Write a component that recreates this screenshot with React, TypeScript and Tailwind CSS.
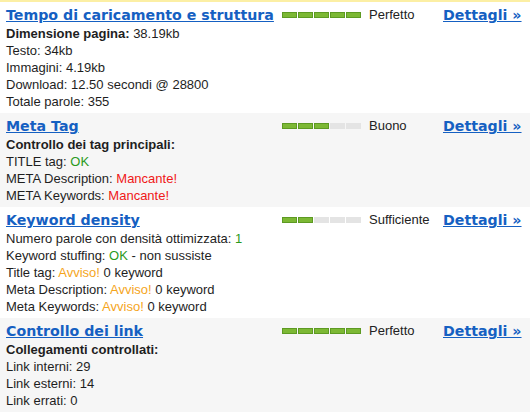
import React from 'react';

type Line = { parts: { text: string; tone?: 'ok' | 'bad' | 'warn' | 'bold' }[] };

type Section = {
  title: string;
  score: number;
  status: string;
  shaded: boolean;
  lines: Line[];
};

const TONES: Record<string, string> = {
  ok: 'text-[#2a9a1c]',
  bad: 'text-[#f01818]',
  warn: 'text-[#f5a51c]',
  bold: 'font-bold',
};

const SECTIONS: Section[] = [
  {
    title: 'Tempo di caricamento e struttura',
    score: 5,
    status: 'Perfetto',
    shaded: false,
    lines: [
      { parts: [{ text: 'Dimensione pagina:', tone: 'bold' }, { text: ' 38.19kb' }] },
      { parts: [{ text: 'Testo: 34kb' }] },
      { parts: [{ text: 'Immagini: 4.19kb' }] },
      { parts: [{ text: 'Download: 12.50 secondi @ 28800' }] },
      { parts: [{ text: 'Totale parole: 355' }] },
    ],
  },
  {
    title: 'Meta Tag',
    score: 3,
    status: 'Buono',
    shaded: true,
    lines: [
      { parts: [{ text: 'Controllo dei tag principali:', tone: 'bold' }] },
      { parts: [{ text: 'TITLE tag: ' }, { text: 'OK', tone: 'ok' }] },
      { parts: [{ text: 'META Description: ' }, { text: 'Mancante!', tone: 'bad' }] },
      { parts: [{ text: 'META Keywords: ' }, { text: 'Mancante!', tone: 'bad' }] },
    ],
  },
  {
    title: 'Keyword density',
    score: 2,
    status: 'Sufficiente',
    shaded: false,
    lines: [
      { parts: [{ text: 'Numero parole con densità ottimizzata: ' }, { text: '1', tone: 'ok' }] },
      { parts: [{ text: 'Keyword stuffing: ' }, { text: 'OK', tone: 'ok' }, { text: ' - non sussiste' }] },
      { parts: [{ text: 'Title tag: ' }, { text: 'Avviso!', tone: 'warn' }, { text: ' 0 keyword' }] },
      { parts: [{ text: 'Meta Description: ' }, { text: 'Avviso!', tone: 'warn' }, { text: ' 0 keyword' }] },
      { parts: [{ text: 'Meta Keywords: ' }, { text: 'Avviso!', tone: 'warn' }, { text: ' 0 keyword' }] },
    ],
  },
  {
    title: 'Controllo dei link',
    score: 5,
    status: 'Perfetto',
    shaded: true,
    lines: [
      { parts: [{ text: 'Collegamenti controllati:', tone: 'bold' }] },
      { parts: [{ text: 'Link interni: 29' }] },
      { parts: [{ text: 'Link esterni: 14' }] },
      { parts: [{ text: 'Link errati: 0' }] },
    ],
  },
];

function ScoreBar({ score }: { score: number }) {
  return (
    <div className="flex gap-[1px] w-[80px] mt-[7px] h-[6px]">
      {[0, 1, 2, 3, 4].map((i) =>
        i < score ? (
          <div key={i} className="w-[15px] h-[6px] bg-[#7cb834] border border-[#5d9a22]" />
        ) : (
          <div key={i} className="w-[15px] h-[6px] bg-[#e4e4e4]" />
        ),
      )}
    </div>
  );
}

export default function App() {
  return (
    <div className="w-[530px] h-[414px] overflow-hidden bg-white border-t-2 border-[#fcefa4] text-[13px] text-[#1e1e1e] font-['Liberation_Sans',Arial,sans-serif]">
      {SECTIONS.map((s) => (
        <div key={s.title} className={`flex px-[6px] py-[3px] ${s.shaded ? 'bg-[#f6f6f6]' : 'bg-white'}`}>
          <div className="w-[276px]">
            <a
              href="#"
              className="block text-[14.2px] leading-[20px] font-bold underline text-[#1560c2] font-['DejaVu_Sans',Verdana,sans-serif] whitespace-nowrap"
            >
              {s.title}
            </a>
            {s.lines.map((l, i) => (
              <div key={i} className="leading-[17px]">
                {l.parts.map((p, j) => (
                  <span key={j} className={p.tone ? TONES[p.tone] : ''}>
                    {p.text}
                  </span>
                ))}
              </div>
            ))}
          </div>
          <ScoreBar score={s.score} />
          <div className="ml-[7px] w-[74px] leading-[20px] text-[#222]">{s.status}</div>
          <a
            href="#"
            className="text-[14.2px] leading-[20px] font-bold underline text-[#1560c2] font-['DejaVu_Sans',Verdana,sans-serif] whitespace-nowrap"
          >
            Dettagli »
          </a>
        </div>
      ))}
    </div>
  );
}
